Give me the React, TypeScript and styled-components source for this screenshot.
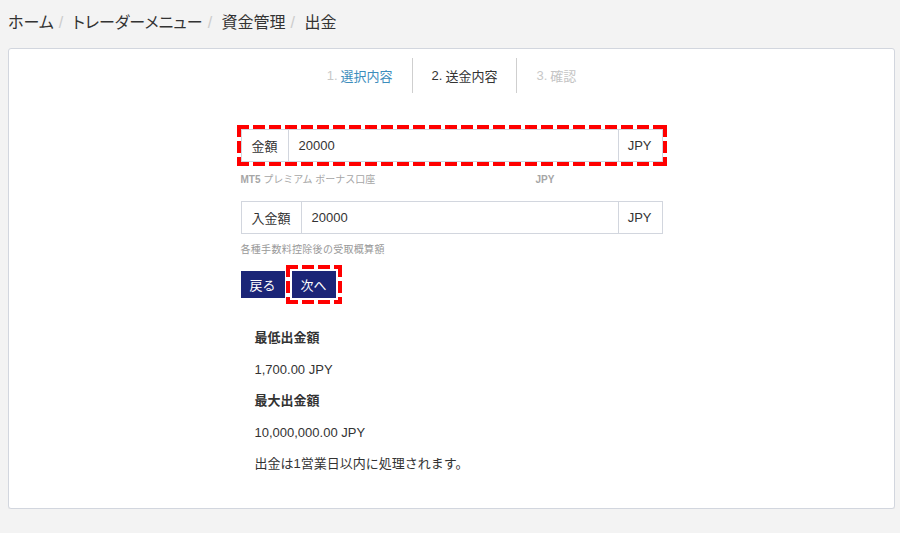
import React from "react";
import styled, { createGlobalStyle, css } from "styled-components";

const Global = createGlobalStyle`
  html, body { margin: 0; padding: 0; }
  body {
    background: #f3f3f3;
    margin: 8px 5px 8px 8px;
    font-family: "Liberation Sans", "Noto Sans CJK JP", sans-serif;
    color: #333;
    font-size: 13px;
  }
`;

const dashed = css`
  position: relative;
  padding: 4px;
  &::after {
    content: "";
    position: absolute;
    inset: 0;
    pointer-events: none;
    background:
      repeating-linear-gradient(90deg, #ff0000 0 12px, transparent 12px 16px) left top / 100% 4px no-repeat,
      repeating-linear-gradient(90deg, #ff0000 0 12px, transparent 12px 16px) left bottom / 100% 4px no-repeat,
      repeating-linear-gradient(180deg, #ff0000 0 12px, transparent 12px 16px) left top / 4px 100% no-repeat,
      repeating-linear-gradient(180deg, #ff0000 0 12px, transparent 12px 16px) right top / 4px 100% no-repeat;
  }
`;

const Breadcrumb = styled.ol`
  list-style: none;
  margin: 0 0 14px;
  padding: 0;
  display: flex;
  align-items: center;
  height: 26px;
  font-size: 16px;
  color: #333;
  font-feature-settings: "palt";
`;

const Crumb = styled.li`
  & + &::before {
    content: "/\\00a0";
    padding: 0 5px;
    color: #ccc;
  }
`;

const Card = styled.div`
  background: #fff;
  border: 1px solid #d2d6de;
  border-radius: 3px;
  box-sizing: border-box;
  min-height: 461px;
  padding-top: 9px;
  box-shadow: 0 1px 1px rgba(0, 0, 0, 0.05);
`;

const Steps = styled.div`
  display: flex;
  justify-content: center;
`;

const Step = styled.div<{ $state: "done" | "current" | "todo" }>`
  height: 35px;
  display: flex;
  align-items: center;
  padding: 0 19px;
  font-size: 13px;
  color: ${(p) => (p.$state === "done" ? "#3c8dbc" : p.$state === "current" ? "#333" : "#c4c4c4")};
  & + & {
    border-left: 1px solid #cfcfcf;
  }
`;

const StepNum = styled.span<{ $muted: boolean }>`
  color: ${(p) => (p.$muted ? "#c8c8c8" : "inherit")};
  margin-right: 3px;
`;

const Form = styled.div`
  width: 422px;
  margin: 32px auto 0;
`;

const Highlight = styled.div`
  ${dashed};
  margin: 0 -4px;
`;

const InputGroup = styled.div`
  display: flex;
  height: 33px;
  box-sizing: border-box;
  border: 1px solid #d2d6de;
  background: #fff;
`;

const Addon = styled.div<{ $side: "left" | "right" }>`
  display: flex;
  align-items: center;
  padding: 0 10px 0 ${(p) => (p.$side === "left" ? "10px" : "9px")};
  ${(p) => (p.$side === "left" ? "border-right" : "border-left")}: 1px solid #d2d6de;
  font-size: 13px;
  color: #333;
  white-space: nowrap;
`;

const Value = styled.div`
  flex: 1;
  display: flex;
  align-items: center;
  padding-left: 10px;
  font-size: 13px;
  color: #333;
`;

const HelpRow = styled.div`
  display: flex;
  margin-top: 7px;
  line-height: 14px;
  font-size: 10px;
  color: #a6a6a6;
`;

const HelpCol = styled.div<{ $w?: number }>`
  width: ${(p) => (p.$w ? `${p.$w}px` : "auto")};
`;

const Strong = styled.span`
  font-weight: bold;
`;

const Second = styled.div`
  margin-top: 14px;
`;

const Note = styled.div`
  margin-top: 9px;
  line-height: 14px;
  font-size: 10px;
  color: #999;
  letter-spacing: 0.3px;
`;

const Buttons = styled.div`
  display: flex;
  align-items: center;
  gap: 1px;
  margin-top: 8px;
`;

const Btn = styled.button`
  background: #1b2577;
  color: #fff;
  border: none;
  border-radius: 0;
  height: 27px;
  padding: 0 9px;
  font-family: inherit;
  font-size: 13px;
  cursor: pointer;
`;

const BtnHighlight = styled.div`
  ${dashed};
  padding: 6px;
  display: flex;
`;

const Info = styled.div`
  padding-left: 14px;
  margin-top: 24px;
`;

const Line = styled.p<{ $bold?: boolean }>`
  margin: 0 0 11.5px;
  line-height: 20px;
  font-size: 13px;
  font-weight: ${(p) => (p.$bold ? "bold" : "normal")};
  color: #333;
`;

export default function App() {
  return (
    <>
      <Global />
      <Breadcrumb>
        <Crumb>ホーム</Crumb>
        <Crumb>トレーダーメニュー</Crumb>
        <Crumb>資金管理</Crumb>
        <Crumb>出金</Crumb>
      </Breadcrumb>
      <Card>
        <Steps>
          <Step $state="done">
            <StepNum $muted>1.</StepNum>選択内容
          </Step>
          <Step $state="current">
            <StepNum $muted={false}>2.</StepNum>送金内容
          </Step>
          <Step $state="todo">
            <StepNum $muted>3.</StepNum>確認
          </Step>
        </Steps>
        <Form>
          <Highlight>
            <InputGroup>
              <Addon $side="left">金額</Addon>
              <Value>20000</Value>
              <Addon $side="right">JPY</Addon>
            </InputGroup>
          </Highlight>
          <HelpRow>
            <HelpCol $w={295}>
              <Strong>MT5</Strong> プレミアム ボーナス口座
            </HelpCol>
            <HelpCol>
              <Strong>JPY</Strong>
            </HelpCol>
          </HelpRow>
          <Second>
            <InputGroup>
              <Addon $side="left">入金額</Addon>
              <Value>20000</Value>
              <Addon $side="right">JPY</Addon>
            </InputGroup>
          </Second>
          <Note>各種手数料控除後の受取概算額</Note>
          <Buttons>
            <Btn>戻る</Btn>
            <BtnHighlight>
              <Btn>次へ</Btn>
            </BtnHighlight>
          </Buttons>
          <Info>
            <Line $bold>最低出金額</Line>
            <Line>1,700.00 JPY</Line>
            <Line $bold>最大出金額</Line>
            <Line>10,000,000.00 JPY</Line>
            <Line>出金は1営業日以内に処理されます。</Line>
          </Info>
        </Form>
      </Card>
    </>
  );
}
